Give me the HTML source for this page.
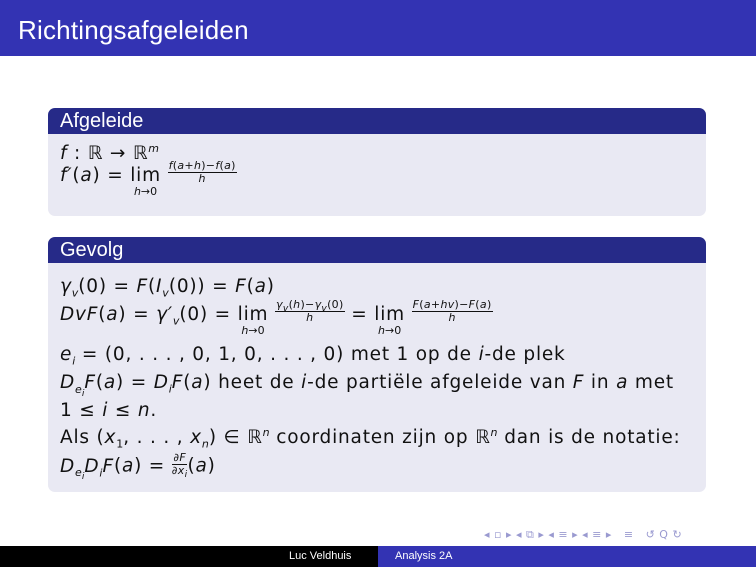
<!DOCTYPE html>
<html><head><style>
body{margin:0;width:756px;height:567px;position:relative;background:#fff;font-family:"DejaVu Sans","Liberation Sans",sans-serif;overflow:hidden}
.hdr{position:absolute;left:0;top:0;width:756px;height:56px;background:#3333b3;color:#fff;font-size:26px}
.hdr span{position:absolute;left:18px;top:15px;font-family:"Liberation Sans",sans-serif;letter-spacing:0.2px}
.bt{position:absolute;left:48px;width:658px;height:26px;background:#262a88;border-radius:7px 7px 0 0;color:#fff;font-size:20px;font-family:"Liberation Sans",sans-serif}
.bt span{position:absolute;left:12px;top:2px}
.bb{position:absolute;left:48px;width:658px;background:#e9e9f3;border-radius:0 0 7px 7px}
.l{position:absolute;left:60px;font-size:18.5px;letter-spacing:0.8px;color:#111;white-space:nowrap;font-family:"DejaVu Sans",sans-serif;line-height:20px}
i{font-style:italic}
sub,sup{line-height:0}
.sm{font-size:11px;letter-spacing:0}
.fr{display:inline-block;vertical-align:middle;text-align:center;font-size:11px;letter-spacing:0.3px;line-height:12px;margin-top:-8px}
.fr .n{border-bottom:1px solid #111;padding:0 1px}
.lim{display:inline-block;text-align:center;vertical-align:top;line-height:20px}
.lim .s{display:block;font-size:11px;line-height:11px;letter-spacing:0}
.ft{position:absolute;top:546px;height:21px;font-size:11px;color:#fff;font-family:"Liberation Sans",sans-serif}
</style></head><body>
<div class="hdr"><span>Richtingsafgeleiden</span></div>

<div class="bt" style="top:108px"><span>Afgeleide</span></div>
<div class="bb" style="top:134px;height:82px"></div>
<div class="l" style="top:144px"><i>f</i> : ℝ → ℝ<sup class="sm"><i>m</i></sup></div>
<div class="l" style="top:166px"><i>f′</i>(<i>a</i>) = <span class="lim">lim<span class="s"><i>h</i>→0</span></span> <span class="fr"><div class="n"><i>f</i>(<i>a</i>+<i>h</i>)−<i>f</i>(<i>a</i>)</div><div><i>h</i></div></span></div>

<div class="bt" style="top:237px"><span>Gevolg</span></div>
<div class="bb" style="top:263px;height:229px"></div>
<div class="l" style="top:277px"><i>γ<sub class="sm">v</sub></i>(0) = <i>F</i>(<i>I<sub class="sm">v</sub></i>(0)) = <i>F</i>(<i>a</i>)</div>
<div class="l" style="top:305px"><i>DvF</i>(<i>a</i>) = <i>γ′<sub class="sm">v</sub></i>(0) = <span class="lim">lim<span class="s"><i>h</i>→0</span></span> <span class="fr"><div class="n"><i>γ<sub>v</sub></i>(<i>h</i>)−<i>γ<sub>v</sub></i>(0)</div><div><i>h</i></div></span> = <span class="lim">lim<span class="s"><i>h</i>→0</span></span> <span class="fr"><div class="n"><i>F</i>(<i>a</i>+<i>hv</i>)−<i>F</i>(<i>a</i>)</div><div><i>h</i></div></span></div>
<div class="l" style="top:345px"><i>e<sub class="sm">i</sub></i> = (0, . . . , 0, 1, 0, . . . , 0) met 1 op de <i>i</i>-de plek</div>
<div class="l" style="top:373px"><i>D<sub class="sm">e<sub>i</sub></sub>F</i>(<i>a</i>) = <i>D<sub class="sm">i</sub>F</i>(<i>a</i>) heet de <i>i</i>-de partiële afgeleide van <i>F</i> in <i>a</i> met</div>
<div class="l" style="top:401px">1 ≤ <i>i</i> ≤ <i>n</i>.</div>
<div class="l" style="top:428px">Als (<i>x</i><sub class="sm">1</sub>, . . . , <i>x<sub class="sm">n</sub></i>) ∈ ℝ<sup class="sm"><i>n</i></sup> coordinaten zijn op ℝ<sup class="sm"><i>n</i></sup> dan is de notatie:</div>
<div class="l" style="top:456px"><i>D<sub class="sm">e<sub>i</sub></sub>D<sub class="sm">i</sub>F</i>(<i>a</i>) = <span class="fr" style="margin-top:-4px"><div class="n">∂<i>F</i></div><div>∂<i>x<sub>i</sub></i></div></span>(<i>a</i>)</div>

<div style="position:absolute;left:484px;top:528px;font-size:11px;color:#9a9ad0;letter-spacing:0.5px;white-space:nowrap">◂ ▫ ▸ ◂ ⧉ ▸ ◂ ≡ ▸ ◂ ≡ ▸ &nbsp; ≡ &nbsp; ↺ Q ↻</div>
<div class="ft" style="left:0;width:378px;background:#000"><span style="position:absolute;left:289px;top:4px">Luc Veldhuis</span></div>
<div class="ft" style="left:378px;width:378px;background:#3333b3"><span style="position:absolute;left:17px;top:4px">Analysis 2A</span></div>
</body></html>
